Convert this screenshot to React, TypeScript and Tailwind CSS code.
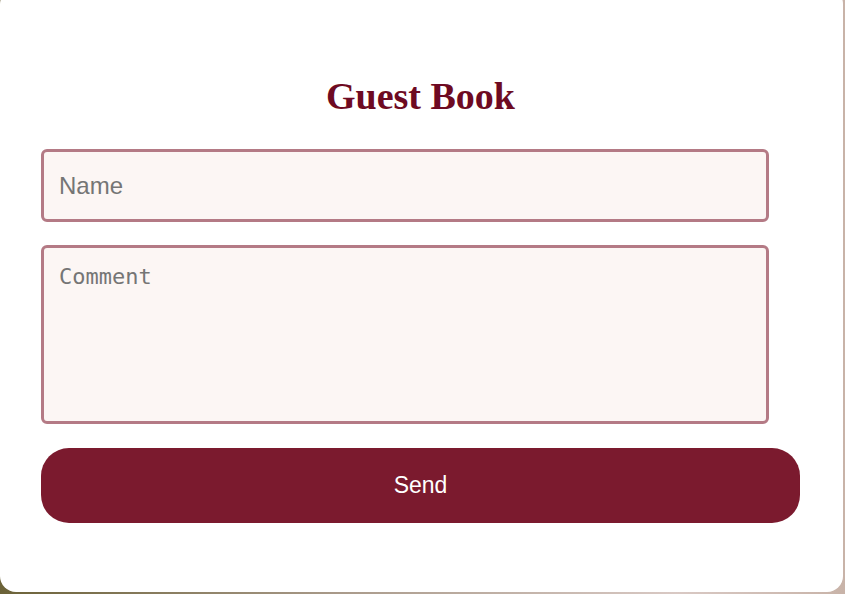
export default function App() {
  return (
    <div className="relative h-[594px] w-[845px] overflow-hidden bg-[linear-gradient(90deg,#6b6238_0%,#a99a8a_40%,#d9c9c4_80%,#c8b3a8_100%)]">
      <div className="-mt-[12px] h-[604px] w-[843px] rounded-[16px] bg-white pl-[41px] pt-[12px]">
        <div className="w-[759px]">
          <h1
            className="pt-[72px] text-center text-[38px] font-bold leading-[48px] text-[#6e0a22]"
            style={{ fontFamily: '"Liberation Serif", "DejaVu Serif", serif' }}
          >
            Guest Book
          </h1>
          <div className="mt-[29px] flex flex-col">
            <input
              placeholder="Name"
              className="h-[73px] w-[728px] rounded-[6px] border-[3px] border-[#b47a85] bg-[#fcf6f4] px-[15px] text-[24px] text-[#333] outline-none placeholder:text-[#757575]"
              style={{ fontFamily: '"Liberation Sans", Arial, sans-serif' }}
            />
            <textarea
              placeholder="Comment"
              className="mt-[23px] h-[179px] w-[728px] resize-none rounded-[6px] border-[3px] border-[#b47a85] bg-[#fcf6f4] px-[15px] py-[15px] text-[22px] leading-[28px] text-[#333] outline-none placeholder:text-[#757575]"
              style={{ fontFamily: '"DejaVu Sans Mono", "Liberation Mono", monospace' }}
            />
            <button
              className="mt-[24px] h-[75px] w-[759px] rounded-[28px] bg-[#7b1a2e] text-[23px] text-white"
              style={{ fontFamily: '"Liberation Sans", Arial, sans-serif' }}
            >
              Send
            </button>
          </div>
        </div>
      </div>
    </div>
  );
}
